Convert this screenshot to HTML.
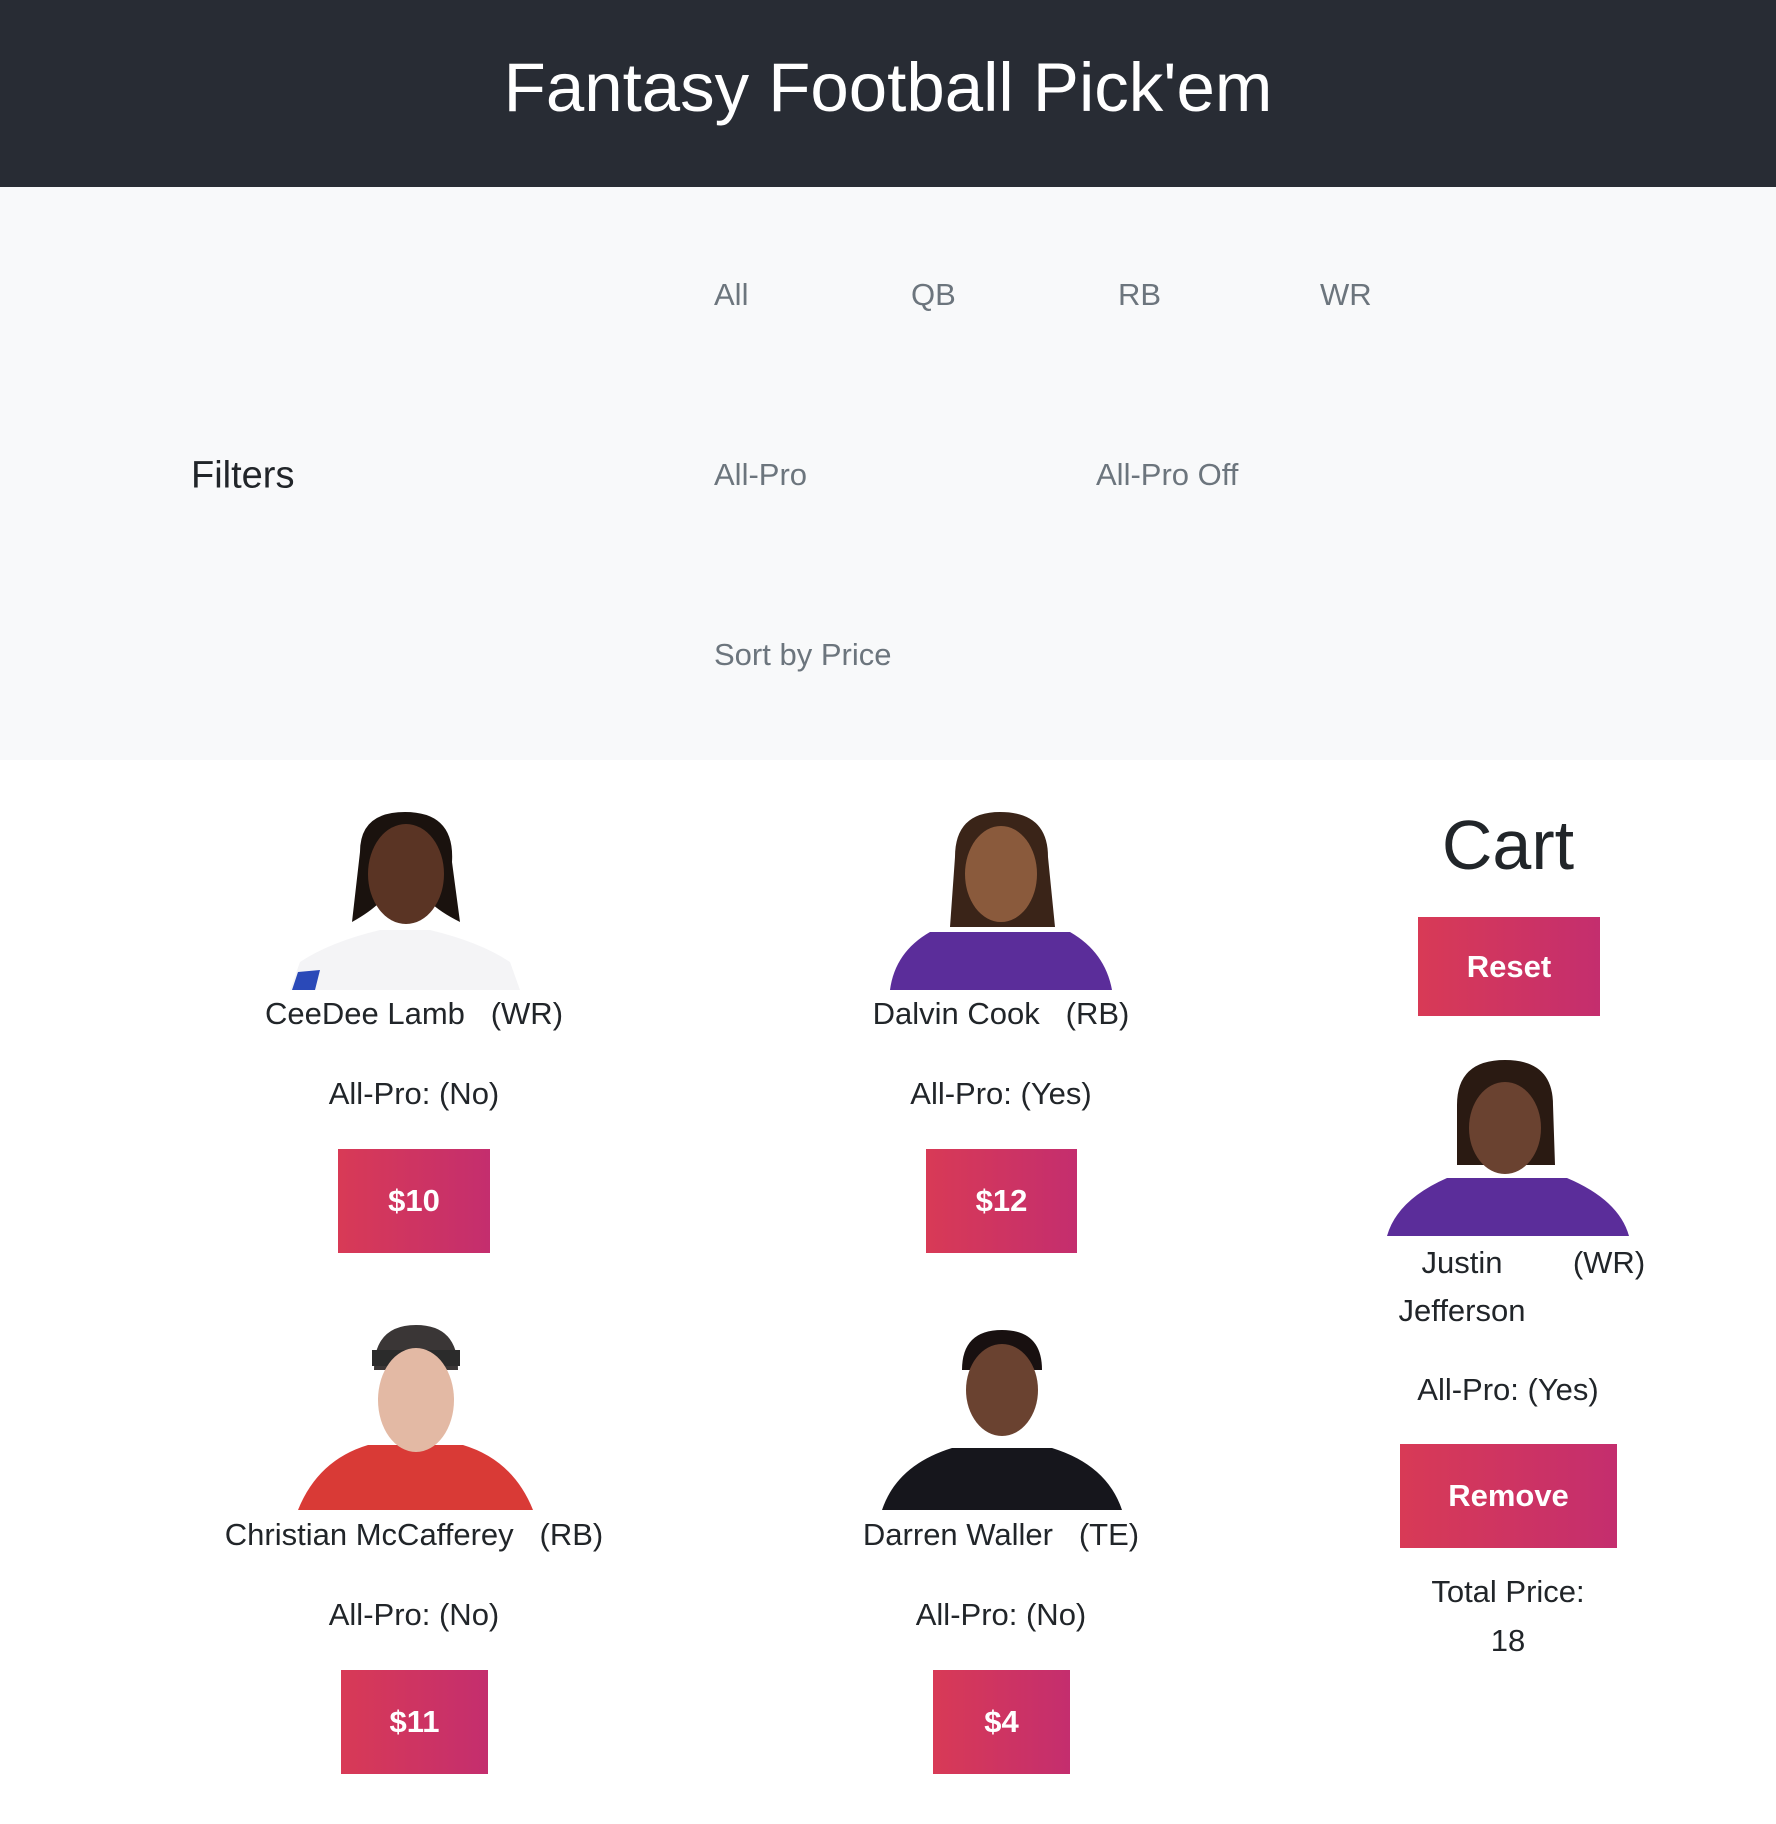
<!DOCTYPE html>
<html><head><meta charset="utf-8"><style>
*{margin:0;padding:0;box-sizing:border-box}
body{width:1776px;height:1824px;background:#fff;font-family:"Liberation Sans",sans-serif;color:#212529;position:relative;overflow:hidden}
.hdr{position:absolute;left:0;top:0;width:1776px;height:187px;background:#282c34;color:#fff;font-size:69px;text-align:center;line-height:176px}
.flt{position:absolute;left:0;top:187px;width:1776px;height:573px;background:#f8f9fa}
.t{position:absolute;white-space:nowrap;transform:translate(-50%,-50%)}
.l{position:absolute;white-space:nowrap;transform:translateY(-50%)}
.g{color:#6c757d;font-size:31px}
.b{font-size:31px}
.btn{position:absolute;background:linear-gradient(90deg,#d83a56,#c42e6e);color:#fff;font-weight:bold;font-size:31px;display:flex;align-items:center;justify-content:center}
</style></head><body>
<div class="hdr">Fantasy Football Pick'em</div>
<div class="flt"></div>
<div class="l" style="left:191px;top:476px;font-size:38px">Filters</div>
<div class="l g" style="left:714px;top:295px">All</div>
<div class="l g" style="left:911px;top:295px">QB</div>
<div class="l g" style="left:1118px;top:295px">RB</div>
<div class="l g" style="left:1320px;top:295px">WR</div>
<div class="l g" style="left:714px;top:475px">All-Pro</div>
<div class="l g" style="left:1096px;top:475px">All-Pro Off</div>
<div class="l g" style="left:714px;top:655px">Sort by Price</div>

<svg style="position:absolute;left:290px;top:812px" width="230" height="178"><path d="M0 178 L10 150 Q40 130 90 118 L140 118 Q190 130 220 150 L230 178Z" fill="#f4f4f6"/><path d="M8 160 L30 158 L25 178 L2 178Z" fill="#2a49b8"/><path d="M70 40 Q70 0 115 0 Q165 0 162 50 L170 110 Q150 100 140 90 L90 90 Q80 100 62 110Z" fill="#1a120e"/><ellipse cx="116" cy="62" rx="38" ry="50" fill="#5a3424"/></svg>
<svg style="position:absolute;left:890px;top:812px" width="225" height="178"><path d="M0 178 Q5 140 40 120 L180 120 Q215 140 222 178Z" fill="#5b2d9a"/><path d="M65 45 Q65 0 110 0 Q158 0 158 45 L165 115 L60 115Z" fill="#3a2418"/><ellipse cx="111" cy="62" rx="36" ry="48" fill="#8a5a3c"/></svg>
<svg style="position:absolute;left:298px;top:1320px" width="235" height="190"><path d="M0 190 Q20 140 70 125 L165 125 Q215 140 235 190Z" fill="#d93a36"/><path d="M76 50 Q76 5 118 5 Q160 5 160 50Z" fill="#3a3636"/><rect x="74" y="30" width="88" height="16" fill="#2b2b2b"/><ellipse cx="118" cy="80" rx="38" ry="52" fill="#e3b9a4"/></svg>
<svg style="position:absolute;left:882px;top:1330px" width="240" height="180"><path d="M0 180 Q15 135 70 118 L170 118 Q225 135 240 180Z" fill="#16161c"/><path d="M80 40 Q80 0 120 0 Q160 0 160 40Z" fill="#181010"/><ellipse cx="120" cy="60" rx="36" ry="46" fill="#6a4230"/></svg>
<svg style="position:absolute;left:1387px;top:1060px" width="242" height="176"><path d="M0 176 Q10 140 60 118 L180 118 Q232 140 242 176Z" fill="#5b2d9a"/><path d="M70 45 Q70 0 118 0 Q166 0 166 45 L168 105 L70 105Z" fill="#2a1a12"/><ellipse cx="118" cy="68" rx="36" ry="46" fill="#6a4230"/></svg>

<div class="t b" style="left:414px;top:1014px">CeeDee Lamb &nbsp; (WR)</div>
<div class="t b" style="left:414px;top:1094px">All-Pro: (No)</div>
<div class="btn" style="left:338px;top:1149px;width:152px;height:104px">$10</div>

<div class="t b" style="left:1001px;top:1014px">Dalvin Cook &nbsp; (RB)</div>
<div class="t b" style="left:1001px;top:1094px">All-Pro: (Yes)</div>
<div class="btn" style="left:926px;top:1149px;width:151px;height:104px">$12</div>

<div class="t b" style="left:414px;top:1535px">Christian McCafferey &nbsp; (RB)</div>
<div class="t b" style="left:414px;top:1615px">All-Pro: (No)</div>
<div class="btn" style="left:341px;top:1670px;width:147px;height:104px">$11</div>

<div class="t b" style="left:1001px;top:1535px">Darren Waller &nbsp; (TE)</div>
<div class="t b" style="left:1001px;top:1615px">All-Pro: (No)</div>
<div class="btn" style="left:933px;top:1670px;width:137px;height:104px">$4</div>

<div class="t" style="left:1508px;top:845px;font-size:70px">Cart</div>
<div class="btn" style="left:1418px;top:917px;width:182px;height:99px">Reset</div>
<div class="t b" style="left:1462px;top:1263px">Justin</div>
<div class="t b" style="left:1609px;top:1263px">(WR)</div>
<div class="t b" style="left:1462px;top:1311px">Jefferson</div>
<div class="t b" style="left:1508px;top:1390px">All-Pro: (Yes)</div>
<div class="btn" style="left:1400px;top:1444px;width:217px;height:104px">Remove</div>
<div class="t b" style="left:1508px;top:1592px">Total Price:</div>
<div class="t b" style="left:1508px;top:1641px">18</div>
</body></html>
